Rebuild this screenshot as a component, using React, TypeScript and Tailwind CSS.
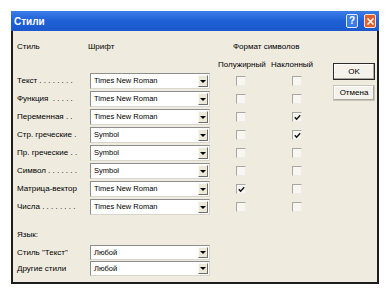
import React from 'react';

const font = { fontFamily: '"Liberation Sans", Arial, sans-serif' };

interface Row {
  label: string;
  font: string;
  bold: boolean;
  italic: boolean;
}

const rows: Row[] = [
  { label: 'Текст . . . . . . . .', font: 'Times New Roman', bold: false, italic: false },
  { label: 'Функция  . . . . .', font: 'Times New Roman', bold: false, italic: false },
  { label: 'Переменная . .', font: 'Times New Roman', bold: false, italic: true },
  { label: 'Стр. греческие .', font: 'Symbol', bold: false, italic: true },
  { label: 'Пр. греческие . .', font: 'Symbol', bold: false, italic: false },
  { label: 'Символ . . . . . . .', font: 'Symbol', bold: false, italic: false },
  { label: 'Матрица-вектор', font: 'Times New Roman', bold: true, italic: false },
  { label: 'Числа . . . . . . . .', font: 'Times New Roman', bold: false, italic: false },
];

function Select({ value, h = 'h-[16px]' }: { value: string; h?: string }) {
  return (
    <div className={`w-[120px] ${h} flex items-stretch bg-white border border-[#8d8d8d] border-r-[#d8d6cc] border-b-[#d8d6cc]`}>
      <div className="flex-1 flex items-center pl-[3px] text-[7.5px] text-black leading-none">{value}</div>
      <div className="w-[10px] my-[1px] mr-[1px] flex items-center justify-center bg-[#ece9d8] border border-[#f8f8f4] border-r-[#6e6e6e] border-b-[#6e6e6e]">
        <div className="w-0 h-0 border-l-[3px] border-r-[3px] border-t-[3px] border-l-transparent border-r-transparent border-t-black" />
      </div>
    </div>
  );
}

function Check({ checked }: { checked: boolean }) {
  return (
    <div className="w-[10px] h-[10px] flex items-center justify-center bg-[#f7f6f1] border border-[#a9a7a0] border-r-[#eeece6] border-b-[#eeece6]">
      {checked && (
        <svg width="7" height="7" viewBox="0 0 7 7">
          <path d="M0.8 3.2 L2.6 5.2 L6.2 1.2" stroke="#111" strokeWidth="1.4" fill="none" />
        </svg>
      )}
    </div>
  );
}

export default function App() {
  return (
    <div className="w-[390px] h-[292px] bg-white pt-[11px] pl-[11px]" style={font}>
      <div className="w-[368px] h-[273px] flex flex-col bg-[#efebdf] border-x-2 border-b-2 border-[#1d1d1d]">
        {/* title bar */}
        <div className="h-[20px] -mx-[2px] flex items-center justify-between pl-[3px] pr-[3px] bg-gradient-to-b from-[#3a7de6] via-[#1f5fd6] to-[#1b58cc]">
          <span className="text-white font-bold text-[10px]">Стили</span>
          <div className="flex items-center gap-[6px]">
            <div className="w-[12px] h-[14px] flex items-center justify-center rounded-[2px] bg-[#3c7ee8] border border-[#dfe9fb] text-white text-[10px] font-bold leading-none">?</div>
            <div className="w-[12px] h-[14px] flex items-center justify-center rounded-[2px] bg-[#e0602f] border border-[#fbe3d8]">
              <svg width="7" height="7" viewBox="0 0 7 7">
                <path d="M0.5 0.5 L6.5 6.5 M6.5 0.5 L0.5 6.5" stroke="white" strokeWidth="1.5" />
              </svg>
            </div>
          </div>
        </div>

        {/* body */}
        <div className="flex-1 flex text-[8px] text-black">
          <div className="flex-1 flex flex-col pl-[4px]">
            <div className="mt-[10px] h-[11px] flex items-center">
              <span className="w-[71px]">Стиль</span>
              <span className="w-[145px]">Шрифт</span>
              <span>Формат символов</span>
            </div>
            <div className="mt-[7px] h-[11px] flex items-center">
              <span className="ml-[201px] w-[53px]">Полужирный</span>
              <span>Наклонный</span>
            </div>
            <div className="mt-[3px] flex flex-col gap-[2px]">
              {rows.map((r) => (
                <div key={r.label} className="h-[16px] flex items-center">
                  <span className="w-[73px] whitespace-pre">{r.label}</span>
                  <Select value={r.font} />
                  <div className="ml-[26px]">
                    <Check checked={r.bold} />
                  </div>
                  <div className="ml-[46px]">
                    <Check checked={r.italic} />
                  </div>
                </div>
              ))}
            </div>
            <div className="mt-[14px] h-[11px] flex items-center">Язык:</div>
            <div className="mt-[5px] flex flex-col gap-[1px]">
              <div className="h-[15px] flex items-center">
                <span className="w-[73px]">Стиль "Текст"</span>
                <Select value="Любой" h="h-[15px]" />
              </div>
              <div className="h-[15px] flex items-center">
                <span className="w-[73px]">Другие стили</span>
                <Select value="Любой" h="h-[15px]" />
              </div>
            </div>
          </div>

          <div className="w-[42px] mr-[2px] pt-[32px] flex flex-col gap-[5px]">
            <div className="h-[17px] flex items-center justify-center bg-[#f4f2ea] border border-[#2a2a2a] shadow-[inset_-1px_-1px_0_#a8a69e,inset_1px_1px_0_#ffffff]">
              OK
            </div>
            <div className="h-[16px] flex items-center justify-center bg-[#f4f2ea] border border-[#c9c6bb] shadow-[inset_-1px_-1px_0_#a8a69e,inset_1px_1px_0_#ffffff]">
              Отмена
            </div>
          </div>
        </div>
      </div>
    </div>
  );
}
